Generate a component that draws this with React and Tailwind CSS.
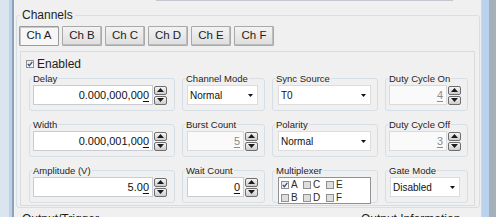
import React from "react";

// Small spin button pair (up / down)
const SpinButton = ({ up }) => (
  <div className="h-[9px] border border-[#6e6e6e] rounded-[2px] bg-gradient-to-b from-[#f6f6f6] to-[#cdcdcd] flex items-center justify-center">
    <svg width="7" height="4" viewBox="0 0 7 4">
      <path d={up ? "M0 4 L3.5 0 L7 4 Z" : "M0 0 L3.5 4 L7 0 Z"} fill="#1b1b1b" />
    </svg>
  </div>
);

const Spinner = () => (
  <div className="flex flex-col gap-[1px] w-[13px]">
    <SpinButton up />
    <SpinButton />
  </div>
);

const NumberField = ({ value, width, disabled }) => (
  <div className="flex items-center gap-[1px]">
    <div
      className={`h-[20px] border text-right pr-[3px] text-[11px] leading-[18px] ${
        disabled
          ? "bg-[#fafafa] border-[#dadada] text-[#8c8c8c]"
          : "bg-white border-[#c9ccd2] text-[#111]"
      }`}
      style={{ width }}
    >
      {value.slice(0, -1)}
      <span className="underline underline-offset-[2px]">{value.slice(-1)}</span>
    </div>
    <Spinner />
  </div>
);

const Dropdown = ({ value, width }) => (
  <div
    className="h-[20px] bg-white border border-[#dcdcdc] flex items-center justify-between pl-[2px] pr-[4px] text-[10px] text-[#111]"
    style={{ width }}
  >
    <span>{value}</span>
    <svg width="5" height="3" viewBox="0 0 5 3">
      <path d="M0 0 L5 0 L2.5 3 Z" fill="#111" />
    </svg>
  </div>
);

const Check = ({ checked, gray }) => (
  <div
    className={`w-[8px] h-[8px] border border-[#8e8f8f] flex items-center justify-center ${
      gray && !checked ? "bg-[#dedede]" : "bg-gradient-to-br from-[#e6e6e6] to-white"
    }`}
  >
    {checked && (
      <svg width="6" height="6" viewBox="0 0 6 6">
        <path d="M0.8 3 L2.4 4.7 L5.3 0.8" stroke="#3e4f86" strokeWidth="1.3" fill="none" />
      </svg>
    )}
  </div>
);

// Group box with caption sitting on the top border
const Group = ({ label, children, className = "" }) => (
  <div className={`relative h-[33px] border border-[#d5dfe5] rounded-[3px] pl-[3px] pt-[6px] ${className}`}>
    <span className="absolute left-[2px] -top-[6px] px-[1px] bg-[#f0f0f0] text-[9.5px] leading-[11px] text-[#1e1e1e]">
      {label}
    </span>
    {children}
  </div>
);

const tabs = ["Ch A", "Ch B", "Ch C", "Ch D", "Ch E", "Ch F"];

const muxItems = [
  { id: "A", checked: true },
  { id: "C" },
  { id: "E" },
  { id: "B" },
  { id: "D" },
  { id: "F" },
];

export default function App() {
  return (
    <div className="w-[496px] h-[217px] overflow-hidden flex bg-[#f0f0f0] font-['Liberation_Sans',Arial,sans-serif] text-[#1e1e1e]">
      {/* left window frame */}
      <div className="w-[14px] shrink-0 bg-[#dbe5ef] border-r-[2px] border-[#8ea3ba] relative">
        <div className="absolute right-0 top-0 bottom-0 w-[3px] bg-[#bcd1e8]" />
      </div>

      {/* content */}
      <div className="w-[467px] shrink-0 flex flex-col">
        <div className="h-[3px] ml-[142px] w-[297px] border border-t-0 border-[#c4c8ce]" />

        {/* Channels group */}
        <div className="relative mt-[14px] ml-[2px] mr-[1px] border border-[#d5dfe5] rounded-[3px] pt-[10px] pl-[2px] pr-[4px] pb-[1px]">
          <span className="absolute left-[3px] -top-[8px] px-[2px] bg-[#f0f0f0] text-[12px] leading-[14px]">
            Channels
          </span>

          {/* channel buttons */}
          <div className="flex gap-[3px]">
            {tabs.map((t, i) => (
              <div
                key={t}
                className={`w-[40px] h-[20px] flex items-center justify-center text-[11.5px] border rounded-[1px] ${
                  i === 0
                    ? "bg-[#f7f7f7] border-[#9a9a9a] shadow-[inset_1px_1px_0_#c8c8c8]"
                    : "bg-gradient-to-b from-[#f3f3f3] to-[#dedede] border-[#a9a9a9] shadow-[inset_-1px_-1px_0_#bdbdbd]"
                }`}
              >
                {t}
              </div>
            ))}
          </div>

          {/* tab page */}
          <div className="mt-[5px] ml-[1px] border border-[#d9dcdf] pl-[5px] pt-[5px] pb-[2px]">
            <div className="flex items-center gap-[3px] h-[14px]">
              <Check checked />
              <span className="text-[12px] leading-[14px]">Enabled</span>
            </div>

            <div className="mt-[7px] ml-[3px] grid grid-cols-[146px_83px_106px_83px] gap-x-[7px] gap-y-[13px]">
              <Group label="Delay">
                <NumberField value="0.000,000,000" width={120} />
              </Group>
              <Group label="Channel Mode" className="pl-[4px]">
                <Dropdown value="Normal" width={71} />
              </Group>
              <Group label="Sync Source" className="pl-[5px]">
                <Dropdown value="T0" width={93} />
              </Group>
              <Group label="Duty Cycle On">
                <NumberField value="4" width={58} disabled />
              </Group>

              <Group label="Width">
                <NumberField value="0.000,001,000" width={120} />
              </Group>
              <Group label="Burst Count" className="pl-[4px]">
                <NumberField value="5" width={57} disabled />
              </Group>
              <Group label="Polarity" className="pl-[5px]">
                <Dropdown value="Normal" width={93} />
              </Group>
              <Group label="Duty Cycle Off">
                <NumberField value="3" width={58} disabled />
              </Group>

              <Group label="Amplitude (V)">
                <NumberField value="5.00" width={120} />
              </Group>
              <Group label="Wait Count" className="pl-[4px]">
                <NumberField value="0" width={57} />
              </Group>
              <Group label="Multiplexer" className="pl-[5px] pt-[2px]">
                <div className="w-[93px] h-[27px] bg-white border border-[#8e9196] grid grid-cols-[22px_23px_22px] gap-y-[2px] pl-[2px] pt-[2px] text-[10px] leading-[10px]">
                  {muxItems.map((m) => (
                    <div key={m.id} className="flex items-center gap-[2px]">
                      <Check checked={m.checked} gray />
                      <span className="text-[#2a2a2a]">{m.id}</span>
                    </div>
                  ))}
                </div>
              </Group>
              <Group label="Gate Mode" className="pl-[4px]">
                <Dropdown value="Disabled" width={70} />
              </Group>
            </div>
          </div>
        </div>

        {/* next groups, cut off by the window edge as in the screenshot */}
        <div className="flex mt-[4px] text-[12px] leading-[14px]">
          <span className="ml-[8px]">Output/Trigger</span>
          <span className="ml-[262px]">Output Information</span>
        </div>
      </div>

      {/* right window frame */}
      <div className="flex-1 flex border-l border-[#d6d6d6]">
        <div className="w-[7px] bg-[#b9d3ee]" />
        <div className="flex-1 bg-[#a4afba]" />
      </div>
    </div>
  );
}
